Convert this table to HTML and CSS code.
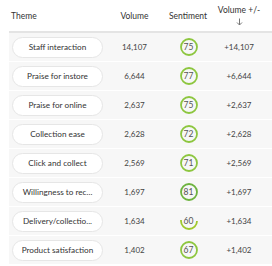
FILE: index.html
```html
<!DOCTYPE html>
<html lang="en">
  <head>
    <meta charset="UTF-8" />
    <meta name="viewport" content="width=device-width, initial-scale=1.0" />
    <title>Themes</title>
    <link rel="stylesheet" href="styles.css">
  </head>
  <body>
    <div class="themes">
      <div class="row head">
        <div class="cell theme-head">Theme</div>
        <div class="cell">Volume</div>
        <div class="cell">Sentiment</div>
        <div class="cell change-head">
          Volume +/-
          <svg class="arrow" viewBox="0 0 7 8"><path d="M3.5 0.5V7M1 4.5L3.5 7L6 4.5" /></svg>
        </div>
      </div>

      <div class="row">
        <div class="cell theme"><span class="pill">Staff interaction</span></div>
        <div class="cell">14,107</div>
        <div class="cell">
          <span class="gauge"><svg viewBox="0 0 18 18"><circle cx="9" cy="9" r="8" /></svg><span class="score">75</span></span>
        </div>
        <div class="cell">+14,107</div>
      </div>

      <div class="row">
        <div class="cell theme"><span class="pill">Praise for instore</span></div>
        <div class="cell">6,644</div>
        <div class="cell">
          <span class="gauge"><svg viewBox="0 0 18 18"><circle cx="9" cy="9" r="8" /></svg><span class="score">77</span></span>
        </div>
        <div class="cell">+6,644</div>
      </div>

      <div class="row">
        <div class="cell theme"><span class="pill">Praise for online</span></div>
        <div class="cell">2,637</div>
        <div class="cell">
          <span class="gauge"><svg viewBox="0 0 18 18"><circle cx="9" cy="9" r="8" /></svg><span class="score">75</span></span>
        </div>
        <div class="cell">+2,637</div>
      </div>

      <div class="row">
        <div class="cell theme"><span class="pill">Collection ease</span></div>
        <div class="cell">2,628</div>
        <div class="cell">
          <span class="gauge"><svg viewBox="0 0 18 18"><circle cx="9" cy="9" r="8" /></svg><span class="score">72</span></span>
        </div>
        <div class="cell">+2,628</div>
      </div>

      <div class="row">
        <div class="cell theme"><span class="pill">Click and collect</span></div>
        <div class="cell">2,569</div>
        <div class="cell">
          <span class="gauge"><svg viewBox="0 0 18 18"><circle cx="9" cy="9" r="8" /></svg><span class="score">71</span></span>
        </div>
        <div class="cell">+2,569</div>
      </div>

      <div class="row">
        <div class="cell theme"><span class="pill">Willingness to rec...</span></div>
        <div class="cell">1,697</div>
        <div class="cell">
          <span class="gauge good"><svg viewBox="0 0 18 18"><circle cx="9" cy="9" r="8" /></svg><span class="score">81</span></span>
        </div>
        <div class="cell">+1,697</div>
      </div>

      <div class="row">
        <div class="cell theme"><span class="pill">Delivery/collectio...</span></div>
        <div class="cell">1,634</div>
        <div class="cell">
          <span class="gauge low"><svg viewBox="0 0 18 18"><circle cx="9" cy="9" r="8" /></svg><span class="score">60</span></span>
        </div>
        <div class="cell">+1,634</div>
      </div>

      <div class="row">
        <div class="cell theme"><span class="pill">Product satisfaction</span></div>
        <div class="cell">1,402</div>
        <div class="cell">
          <span class="gauge"><svg viewBox="0 0 18 18"><circle cx="9" cy="9" r="8" /></svg><span class="score">67</span></span>
        </div>
        <div class="cell">+1,402</div>
      </div>
    </div>
  </body>
</html>
```

FILE: styles.css
```css
body {
  margin: 0;
  font-family: Lato, "Open Sans", sans-serif;
  font-size: 8px;
  color: #444;
  background: #fff;
}
.themes {
  margin-left: 9px;
}
.row {
  display: grid;
  grid-template-columns: 103px 45px 62px 40px;
  padding-right: 13px;
  height: 28px;
  background-color: #f7f7f7;
  border-bottom: 1px solid #fff;
}
.row.head {
  height: 31px;
  background-color: #fff;
  border-bottom: 2px solid #e4e4e4;
  color: #333;
  font-size: 8.5px;
}
.cell {
  display: flex;
  align-items: center;
  justify-content: center;
  white-space: nowrap;
}
.theme-head {
  justify-content: flex-start;
  padding-left: 2px;
}
.change-head {
  flex-direction: column;
  gap: 3px;
  line-height: 10px;
}
.arrow {
  width: 7px;
  height: 8px;
  fill: none;
  stroke: #777;
  stroke-width: 1;
}
.theme {
  justify-content: flex-start;
  padding-left: 3px;
}
.pill {
  display: flex;
  align-items: center;
  justify-content: center;
  width: 89px;
  height: 19px;
  border: 1px solid #e6e6e6;
  border-radius: 11px;
  background-color: #fff;
  color: #333;
  font-size: 8.2px;
}
.gauge {
  display: inline-grid;
  width: 18px;
  height: 18px;
  margin-left: 1px;
}
.gauge svg,
.gauge .score {
  grid-area: 1 / 1;
}
.gauge svg {
  width: 18px;
  height: 18px;
}
.gauge circle {
  fill: none;
  stroke: #8dc63f;
  stroke-width: 1.8;
}
.gauge.good circle {
  stroke: #6db33f;
}
.gauge.low circle {
  stroke: #9fc82d;
  stroke-dasharray: 27 60;
  stroke-dashoffset: 1;
}
.score {
  display: flex;
  align-items: center;
  justify-content: center;
  font-size: 8.5px;
  color: #555;
}
```
